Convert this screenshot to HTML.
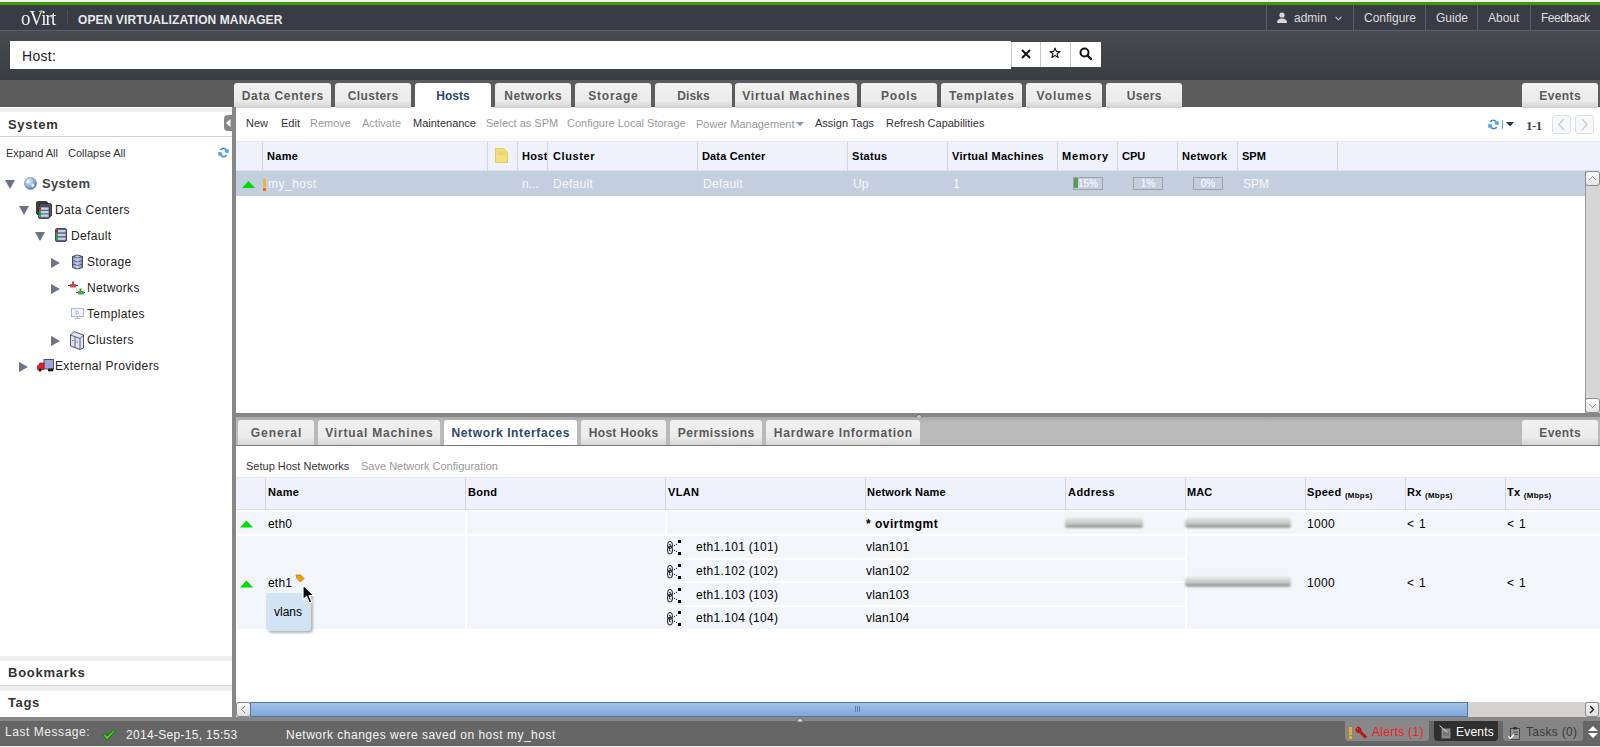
<!DOCTYPE html>
<html><head><meta charset="utf-8">
<style>
*{box-sizing:border-box;margin:0;padding:0}
html,body{width:1600px;height:747px;overflow:hidden;background:#fff;font-family:"Liberation Sans",sans-serif;position:relative}
.a{position:absolute}
.t{position:absolute;white-space:nowrap;line-height:1}
svg{position:absolute;overflow:visible}
/* header */
#topline{left:0;top:0;width:1600px;height:2px;background:#f2f0f0}
#green{left:0;top:2px;width:1600px;height:3px;background:#3e9c04}
#hdr{left:0;top:5px;width:1600px;height:25px;background:#393c46}
#hdrline{left:0;top:30px;width:1600px;height:1px;background:#5a606b}
#search{left:0;top:31px;width:1600px;height:49px;background:linear-gradient(#474b50,#393e42)}
#tabbar{left:0;top:80px;width:1600px;height:27px;background:#5c5c5c}
.hm{position:absolute;top:5px;height:25px;border-left:1px solid #5a606b}
.hmt{position:absolute;top:12px;font-size:12px;color:#dedede;line-height:1;white-space:nowrap}
.mtab{position:absolute;top:83px;height:25px;background:linear-gradient(#f1f1f1 0,#ebebeb 70%,#d2d2d2 100%);border-radius:3px 3px 0 0;font-weight:bold;font-size:12px;color:#5a5a5a;text-align:center;line-height:26px;letter-spacing:0.3px}
.mtab.sel{background:#fff;color:#2b476f}
/* left */
#left{left:0;top:107px;width:232px;height:611px;background:#fff}
#split{left:232px;top:107px;width:4px;height:611px;background:#878787}
.tree{position:absolute;font-size:12px;color:#222;line-height:1;white-space:nowrap;letter-spacing:0.35px}
.tri{position:absolute;width:0;height:0;border-style:solid}
.tri.d{border-width:9px 5px 0 5px;border-color:#6b7385 transparent transparent transparent}
.tri.r{border-width:5px 0 5px 9px;border-color:transparent transparent transparent #6b7385}
/* toolbar */
.tb{position:absolute;top:118px;font-size:11px;color:#333;line-height:1;white-space:nowrap}
.tb.dis{color:#999}
/* grid */
.gh{position:absolute;background:#eff2fc;border-top:1px solid #e3e8f3;border-bottom:1px solid #dde3ee}
.gd{position:absolute;width:1px;background:#d2d6de}
.ght{position:absolute;font-size:11px;font-weight:bold;color:#000;line-height:1;white-space:nowrap;letter-spacing:0.3px}
.rowt{position:absolute;font-size:12px;color:#f6f8fb;line-height:1;white-space:nowrap}
.bar{position:absolute;height:13px;border:1px solid #a2a2a2;background:transparent;font-size:10px;color:#fff;text-align:center;line-height:11px}
.stab{position:absolute;top:420px;height:25px;background:linear-gradient(#f1f1f1 0,#ebebeb 70%,#d4d4d4 100%);border-radius:3px 3px 0 0;font-weight:bold;font-size:12px;color:#5a5a5a;text-align:center;line-height:26px;letter-spacing:0.3px}
.stab.sel{background:#fff;color:#2b476f}
.mb{font-size:8px;letter-spacing:0.25px;position:relative;top:2px}
.nt{position:absolute;font-size:12px;color:#000;line-height:1;white-space:nowrap}
.lr{position:absolute;background:#f2f5fa}
</style></head><body>
<div id="topline" class="a"></div>
<div id="green" class="a"></div>
<div id="hdr" class="a"></div>
<div id="hdrline" class="a"></div>
<div id="search" class="a"></div>
<div id="tabbar" class="a"></div>

<!-- logo -->
<div class="t" style="left:21px;top:8px;font-family:'Liberation Serif',serif;font-size:21px;color:#f2f2f2;letter-spacing:-1px;transform:scaleX(0.9);transform-origin:0 0">oVirt</div>
<div class="a" style="left:40px;top:10px;width:3px;height:3px;background:#7cc242;border-radius:50%"></div>
<div class="a" style="left:67px;top:10px;width:1px;height:14px;background:#4a4e57"></div>
<div class="t" style="left:78px;top:14px;font-size:12px;font-weight:bold;color:#e9e9e9;letter-spacing:0.1px">OPEN VIRTUALIZATION MANAGER</div>

<!-- header menu -->
<div class="hm" style="left:1266px;width:87px"></div>
<div class="hm" style="left:1353px;width:72px"></div>
<div class="hm" style="left:1425px;width:52px"></div>
<div class="hm" style="left:1477px;width:53px"></div>
<div class="hm" style="left:1530px;width:70px"></div>
<svg style="left:1277px;top:12px" width="10" height="11" viewBox="0 0 10 11"><circle cx="5" cy="3" r="2.6" fill="#d8d8d8"/><path d="M0 11 Q0 6.5 5 6.5 Q10 6.5 10 11Z" fill="#d8d8d8"/></svg>
<div class="hmt" style="left:1294px">admin</div>
<svg style="left:1335px;top:16px" width="7" height="5" viewBox="0 0 7 5"><path d="M0.5 0.8 L3.5 3.8 L6.5 0.8" stroke="#cfcfcf" stroke-width="1.1" fill="none"/></svg>
<div class="hmt" style="left:1364px">Configure</div>
<div class="hmt" style="left:1436px">Guide</div>
<div class="hmt" style="left:1488px">About</div>
<div class="hmt" style="left:1541px;letter-spacing:-0.5px">Feedback</div>

<!-- search -->
<div class="a" style="left:10px;top:41px;width:1001px;height:28px;background:#fff"></div>
<div class="t" style="left:22px;top:49px;font-size:14px;color:#222;letter-spacing:0.3px">Host:</div>
<div class="a" style="left:1011px;top:42px;width:90px;height:25px;background:#fff;border-left:1px solid #c8c8c8"></div>
<div class="a" style="left:1040px;top:42px;width:1px;height:25px;background:#c8c8c8"></div>
<div class="a" style="left:1070px;top:42px;width:1px;height:25px;background:#c8c8c8"></div>
<svg style="left:1021px;top:49px" width="10" height="10" viewBox="0 0 10 10"><path d="M1 1L9 9M9 1L1 9" stroke="#111" stroke-width="2"/></svg>
<svg style="left:1049px;top:47px" width="12" height="12" viewBox="0 0 12 12"><path d="M6 1 L7.3 4.4 L11 4.5 L8.1 6.8 L9.1 10.5 L6 8.4 L2.9 10.5 L3.9 6.8 L1 4.5 L4.7 4.4Z" fill="none" stroke="#111" stroke-width="1.1" stroke-linejoin="round"/></svg>
<svg style="left:1079px;top:47px" width="13" height="13" viewBox="0 0 13 13"><circle cx="5.5" cy="5.5" r="4" fill="none" stroke="#111" stroke-width="2"/><path d="M8.5 8.5L12 12" stroke="#111" stroke-width="2.4" stroke-linecap="round"/></svg>

<!-- main tabs -->
<div class="mtab" style="left:234px;width:97px;letter-spacing:0.68px;text-indent:0.68px">Data Centers</div>
<div class="mtab" style="left:335px;width:76px;letter-spacing:0.34px;text-indent:0.34px">Clusters</div>
<div class="mtab sel" style="left:415px;width:76px;letter-spacing:0px;text-indent:0px">Hosts</div>
<div class="mtab" style="left:495px;width:76px;letter-spacing:0.47px;text-indent:0.47px">Networks</div>
<div class="mtab" style="left:575px;width:76px;letter-spacing:0.78px;text-indent:0.78px">Storage</div>
<div class="mtab" style="left:655px;width:77px;letter-spacing:0.1px;text-indent:0.1px">Disks</div>
<div class="mtab" style="left:735px;width:122px;letter-spacing:0.82px;text-indent:0.82px">Virtual Machines</div>
<div class="mtab" style="left:861px;width:76px;letter-spacing:0.8px;text-indent:0.8px">Pools</div>
<div class="mtab" style="left:941px;width:81px;letter-spacing:0.8px;text-indent:0.8px">Templates</div>
<div class="mtab" style="left:1026px;width:76px;letter-spacing:0.95px;text-indent:0.95px">Volumes</div>
<div class="mtab" style="left:1106px;width:76px;letter-spacing:0.34px;text-indent:0.34px">Users</div>
<div class="mtab" style="left:1522px;width:76px;letter-spacing:0.4px;text-indent:0.4px">Events</div>

<!-- LEFT PANEL -->
<div id="left" class="a"></div>
<div class="a" style="left:0;top:108px;width:232px;height:4px;background:#efefef"></div>
<div class="t" style="left:8px;top:118px;font-size:13px;font-weight:bold;color:#333;letter-spacing:0.7px">System</div>
<div class="a" style="left:0;top:136px;width:232px;height:1px;background:#cfcfcf"></div>
<div class="t" style="left:6px;top:148px;font-size:11px;color:#333">Expand All</div>
<div class="t" style="left:68px;top:148px;font-size:11px;color:#333">Collapse All</div>


<!-- tree -->
<div class="tri d" style="left:5px;top:180px"></div>
<svg style="left:24px;top:177px" width="13" height="13" viewBox="0 0 13 13"><defs><radialGradient id="gl" cx="0.35" cy="0.3" r="0.8"><stop offset="0" stop-color="#eef4fb"/><stop offset="0.6" stop-color="#7fa8d8"/><stop offset="1" stop-color="#2f64a8"/></radialGradient></defs><circle cx="6.5" cy="6.5" r="6" fill="url(#gl)" stroke="#8a96a6" stroke-width="0.8"/><path d="M3 3.5 Q5 2.5 6 4.5 Q5 6.5 3.5 6 Z M7.5 6.5 Q10 6 10.5 8.5 Q9 11 7.5 10Z" fill="#fff" opacity="0.85"/></svg>
<div class="tree" style="left:42px;top:177px;font-weight:bold;font-size:13px;color:#444">System</div>

<div class="tri d" style="left:19px;top:206px"></div>
<svg style="left:36px;top:201px" width="17" height="18" viewBox="0 0 17 18"><rect x="0.5" y="0.5" width="11" height="13" rx="1.5" fill="#3d3f44" stroke="#222" stroke-width="0.8"/><rect x="3.5" y="2.5" width="12" height="13" rx="1.5" fill="#55585f" stroke="#222" stroke-width="0.8"/><rect x="2.5" y="5" width="11" height="12.5" rx="1.5" fill="#5c6a8c" stroke="#2a2f3c" stroke-width="0.8"/><rect x="5" y="6.5" width="7.5" height="2.3" fill="#c8d2e6"/><rect x="5" y="10" width="7.5" height="2.3" fill="#c8d2e6"/><rect x="5" y="13.5" width="7.5" height="2.3" fill="#c8d2e6"/><rect x="3" y="6.5" width="1.8" height="2.2" fill="#f00"/><rect x="3" y="10" width="1.8" height="2.2" fill="#0c0"/><rect x="3" y="13.5" width="1.8" height="2.2" fill="#0c0"/></svg>
<div class="tree" style="left:55px;top:204px">Data Centers</div>

<div class="tri d" style="left:35px;top:232px"></div>
<svg style="left:55px;top:228px" width="12" height="14" viewBox="0 0 12 14"><rect x="0.5" y="0.5" width="11" height="13" rx="1.5" fill="#5c6a8c" stroke="#2a2f3c" stroke-width="0.8"/><rect x="3" y="2" width="7.5" height="2.3" fill="#c8d2e6"/><rect x="3" y="5.8" width="7.5" height="2.3" fill="#c8d2e6"/><rect x="3" y="9.6" width="7.5" height="2.3" fill="#c8d2e6"/><rect x="1" y="2" width="1.8" height="2.2" fill="#f00"/><rect x="1" y="5.8" width="1.8" height="2.2" fill="#0c0"/><rect x="1" y="9.6" width="1.8" height="2.2" fill="#0c0"/></svg>
<div class="tree" style="left:71px;top:230px">Default</div>

<div class="tri r" style="left:51px;top:258px"></div>
<svg style="left:72px;top:254px" width="11" height="16" viewBox="0 0 11 16"><defs><linearGradient id="cy" x1="0" x2="1"><stop offset="0" stop-color="#8a93b8"/><stop offset="0.5" stop-color="#d0d6ea"/><stop offset="1" stop-color="#7c86ac"/></linearGradient></defs><path d="M0.5 2.5 Q5.5 -0.5 10.5 2.5 V13.5 Q5.5 16.5 0.5 13.5Z" fill="url(#cy)" stroke="#3b3f55" stroke-width="0.9"/><path d="M0.5 2.5 Q5.5 5.5 10.5 2.5 M0.5 6.5 Q5.5 9.5 10.5 6.5 M0.5 10 Q5.5 13 10.5 10" fill="none" stroke="#3b3f55" stroke-width="0.7"/></svg>
<div class="tree" style="left:87px;top:256px">Storage</div>

<div class="tri r" style="left:51px;top:284px"></div>
<svg style="left:67px;top:281px" width="19" height="14" viewBox="0 0 19 14"><path d="M1 4.5H11 M6 1.5V4.5 M9 8H9.5 M9 11.5H18 M13.5 8.5V11.5" stroke="#333" stroke-width="1"/><rect x="3" y="3" width="6" height="3.5" rx="1" fill="#d04545"/><rect x="11" y="10" width="6" height="3.5" rx="1" fill="#3cb04a"/><rect x="5" y="0.5" width="2" height="2" fill="#b33"/><rect x="12.5" y="7.5" width="2" height="2" fill="#3a3"/></svg>
<div class="tree" style="left:87px;top:282px">Networks</div>

<svg style="left:71px;top:308px" width="13" height="11" viewBox="0 0 13 11"><rect x="0.5" y="0.5" width="12" height="8" fill="#f4f4ff" stroke="#a4a8e0" stroke-width="0.9"/><path d="M5 2.5V6.5L8 4.5Z" fill="none" stroke="#a4a8e0" stroke-width="0.8"/><path d="M6.5 8.5V10.5 M3.5 10.5H9.5" stroke="#a4a8e0" stroke-width="0.9"/></svg>
<div class="tree" style="left:87px;top:308px">Templates</div>

<div class="tri r" style="left:51px;top:336px"></div>
<svg style="left:70px;top:331px" width="14" height="19" viewBox="0 0 14 19"><path d="M0.5 4 L4 0.5 L13.5 4 V17 L10 18.5 L0.5 15Z" fill="#dde3f3" stroke="#3d4255" stroke-width="0.9"/><path d="M0.5 4 L10 7.5 V18.5 M10 7.5 L13.5 4 M5 5.8 V16.5" fill="none" stroke="#3d4255" stroke-width="0.8"/><rect x="2" y="9" width="1.5" height="1" fill="#667"/><rect x="6.5" y="10.5" width="1.5" height="1" fill="#667"/></svg>
<div class="tree" style="left:87px;top:334px">Clusters</div>

<div class="tri r" style="left:19px;top:362px"></div>
<svg style="left:37px;top:359px" width="17" height="13" viewBox="0 0 17 13"><rect x="7" y="0.5" width="9.5" height="9.5" fill="#9da5d8" stroke="#3d4270" stroke-width="0.9"/><path d="M0.5 7 L3 4 H7 V10.5 H0.5Z" fill="#e02020" stroke="#900" stroke-width="0.6"/><circle cx="3" cy="11" r="1.6" fill="#111"/><circle cx="12.5" cy="11" r="1.6" fill="#111"/><circle cx="15" cy="11" r="1.4" fill="#111"/></svg>
<div class="tree" style="left:55px;top:360px">External Providers</div>

<!-- left bottom panels -->
<div class="a" style="left:0;top:656px;width:232px;height:5px;background:#efefef"></div>
<div class="t" style="left:8px;top:666px;font-size:13px;font-weight:bold;color:#333;letter-spacing:0.75px">Bookmarks</div>
<div class="a" style="left:0;top:685px;width:232px;height:1px;background:#d0d0d0"></div>
<div class="a" style="left:0;top:686px;width:232px;height:5px;background:#efefef"></div>
<div class="t" style="left:8px;top:696px;font-size:13px;font-weight:bold;color:#333;letter-spacing:0.6px">Tags</div>


<!-- MAIN UPPER -->
<div class="a" style="left:236px;top:108px;width:1364px;height:305px;background:#fff"></div>
<div class="tb" style="left:246px">New</div>
<div class="tb" style="left:281px">Edit</div>
<div class="tb dis" style="left:310px">Remove</div>
<div class="tb dis" style="left:362px">Activate</div>
<div class="tb" style="left:413px">Maintenance</div>
<div class="tb dis" style="left:486px">Select as SPM</div>
<div class="tb dis" style="left:567px">Configure Local Storage</div>
<div class="tb dis" style="left:696px;top:119px">Power Management</div>
<svg style="left:796px;top:122px" width="8" height="5" viewBox="0 0 8 5"><path d="M0 0H8L4 4.5Z" fill="#8aa0c0"/></svg>
<div class="tb" style="left:815px">Assign Tags</div>
<div class="tb" style="left:886px">Refresh Capabilities</div>

<!-- pager -->
<svg style="left:1488px;top:119px" width="11" height="11" viewBox="0 0 11 11"><path d="M2.3 3 Q5 -0.3 8.2 2.6" fill="none" stroke="#3a8ee8" stroke-width="1.7"/><path d="M6.6 2 L11 2.4 L10.6 6.2 L7 5.4Z" fill="#5aa2ee"/><path d="M8.7 8 Q6 11.3 2.8 8.4" fill="none" stroke="#3a8ee8" stroke-width="1.7"/><path d="M4.4 9 L0 8.6 L0.4 4.8 L4 5.6Z" fill="#5aa2ee"/></svg>
<div class="a" style="left:1502px;top:120px;width:1px;height:9px;background:#6aa0e0"></div>
<svg style="left:1506px;top:122px" width="8" height="5" viewBox="0 0 8 5"><path d="M0 0H8L4 4.5Z" fill="#1f3550"/></svg>
<div class="t" style="left:1526px;top:119px;font-size:13px;font-weight:bold;color:#444;font-family:'Liberation Serif',serif;letter-spacing:-0.5px">1-1</div>
<div class="a" style="left:1552px;top:115px;width:19px;height:19px;border:1px solid #dde0e8;border-radius:3px;background:#f7f8fc"></div>
<div class="a" style="left:1575px;top:115px;width:19px;height:19px;border:1px solid #dde0e8;border-radius:3px;background:#f7f8fc"></div>
<svg style="left:1557px;top:118px" width="9" height="13" viewBox="0 0 9 13"><path d="M7 1L2 6.5L7 12" fill="none" stroke="#ccc" stroke-width="1.4"/></svg>
<svg style="left:1580px;top:118px" width="9" height="13" viewBox="0 0 9 13"><path d="M2 1L7 6.5L2 12" fill="none" stroke="#ccc" stroke-width="1.4"/></svg>

<!-- upper grid header -->
<div class="gh" style="left:236px;top:141px;width:1364px;height:30px"></div>
<div class="gd" style="left:262px;top:142px;height:29px"></div>
<div class="gd" style="left:487px;top:142px;height:29px"></div>
<div class="gd" style="left:517px;top:142px;height:29px"></div>
<div class="gd" style="left:547px;top:142px;height:29px"></div>
<div class="gd" style="left:697px;top:142px;height:29px"></div>
<div class="gd" style="left:847px;top:142px;height:29px"></div>
<div class="gd" style="left:947px;top:142px;height:29px"></div>
<div class="gd" style="left:1057px;top:142px;height:29px"></div>
<div class="gd" style="left:1117px;top:142px;height:29px"></div>
<div class="gd" style="left:1177px;top:142px;height:29px"></div>
<div class="gd" style="left:1237px;top:142px;height:29px"></div>
<div class="gd" style="left:1337px;top:142px;height:29px"></div>
<div class="ght" style="left:267px;top:151px">Name</div>
<svg style="left:495px;top:148px" width="13" height="15" viewBox="0 0 13 15"><path d="M0.5 0.5H9L12.5 4V14.5H0.5Z" fill="#f3e07a" stroke="#d8c050" stroke-width="0.8"/><path d="M2.5 4H10 M2.5 6H10" stroke="#d4bf55" stroke-width="0.6"/></svg>
<div class="a" style="left:517px;top:142px;width:30px;height:29px;overflow:hidden"><div class="ght" style="left:5px;top:9px">Host</div></div>
<div class="ght" style="left:553px;top:151px;letter-spacing:0.6px">Cluster</div>
<div class="ght" style="left:702px;top:151px;letter-spacing:0.15px">Data Center</div>
<div class="ght" style="left:852px;top:151px">Status</div>
<div class="ght" style="left:952px;top:151px">Virtual Machines</div>
<div class="ght" style="left:1062px;top:151px;letter-spacing:0.8px">Memory</div>
<div class="ght" style="left:1122px;top:151px;letter-spacing:0">CPU</div>
<div class="ght" style="left:1182px;top:151px">Network</div>
<div class="ght" style="left:1242px;top:151px;letter-spacing:0">SPM</div>

<!-- selected row -->
<div class="a" style="left:236px;top:171px;width:1349px;height:25px;background:#c3cfdf"></div>
<svg style="left:242px;top:181px" width="13" height="7" viewBox="0 0 13 7"><path d="M0 7L6.5 0L13 7Z" fill="#00dd00"/></svg>
<div class="a" style="left:263px;top:179px;width:3px;height:8px;background:#f5b02a"></div>
<div class="a" style="left:263px;top:188px;width:3px;height:3px;background:#e86a10"></div>
<div class="rowt" style="left:268px;top:178px;letter-spacing:0.5px">my_host</div>
<div class="rowt" style="left:522px;top:178px">n...</div>
<div class="rowt" style="left:553px;top:178px;letter-spacing:0.3px">Default</div>
<div class="rowt" style="left:703px;top:178px;letter-spacing:0.3px">Default</div>
<div class="rowt" style="left:853px;top:178px">Up</div>
<div class="rowt" style="left:953px;top:178px">1</div>
<div class="bar" style="left:1073px;top:177px;width:30px"><div class="a" style="left:0;top:0;width:4px;height:10px;background:#5a9a50"></div><span style="position:relative">15%</span></div>
<div class="bar" style="left:1133px;top:177px;width:30px">1%</div>
<div class="bar" style="left:1193px;top:177px;width:30px">0%</div>
<div class="rowt" style="left:1243px;top:178px">SPM</div>

<!-- v scrollbar upper -->
<div class="a" style="left:1585px;top:171px;width:15px;height:242px;background:#d6d6d6;border-left:1px solid #9a9a9a"></div>
<div class="a" style="left:1585px;top:171px;width:15px;height:15px;background:linear-gradient(#fff,#e4e4e4);border:1px solid #8a8a8a;border-radius:3px"></div>
<svg style="left:1588px;top:175px" width="9" height="6" viewBox="0 0 9 6"><path d="M1 5L4.5 1.5L8 5" fill="none" stroke="#999" stroke-width="1"/></svg>
<div class="a" style="left:1585px;top:398px;width:15px;height:15px;background:linear-gradient(#fff,#e4e4e4);border:1px solid #8a8a8a;border-radius:3px"></div>
<svg style="left:1588px;top:403px" width="9" height="6" viewBox="0 0 9 6"><path d="M1 1L4.5 4.5L8 1" fill="none" stroke="#999" stroke-width="1"/></svg>

<!-- h splitter -->
<div class="a" style="left:236px;top:413px;width:1364px;height:4px;background:#878787"></div>
<div class="a" style="left:236px;top:417px;width:1364px;height:28px;background:linear-gradient(#aaaaaa 0,#b2b2b2 3px,#b9b9b9 4px)"></div>
<div class="a" style="left:236px;top:445px;width:1364px;height:1px;background:#7a7a7a"></div>
<div class="stab" style="left:238px;width:76px;letter-spacing:1.0px;text-indent:1.0px">General</div>
<div class="stab" style="left:318px;width:122px;letter-spacing:0.82px;text-indent:0.82px">Virtual Machines</div>
<div class="stab sel" style="left:444px;width:133px;letter-spacing:0.62px;text-indent:0.62px">Network Interfaces</div>
<div class="stab" style="left:581px;width:85px;letter-spacing:0.3px;text-indent:0.3px">Host Hooks</div>
<div class="stab" style="left:670px;width:92px;letter-spacing:0.5px;text-indent:0.5px">Permissions</div>
<div class="stab" style="left:766px;width:154px;letter-spacing:0.75px;text-indent:0.75px">Hardware Information</div>
<div class="stab" style="left:1522px;width:76px;letter-spacing:0.4px;text-indent:0.4px">Events</div>

<!-- lower toolbar -->
<div class="a" style="left:236px;top:446px;width:1364px;height:256px;background:#fff"></div>
<div class="tb" style="left:246px;top:461px">Setup Host Networks</div>
<div class="tb dis" style="left:361px;top:461px">Save Network Configuration</div>

<!-- lower grid header -->
<div class="gh" style="left:236px;top:477px;width:1364px;height:33px"></div>
<div class="gd" style="left:265px;top:478px;height:32px"></div>
<div class="gd" style="left:465px;top:478px;height:32px"></div>
<div class="gd" style="left:665px;top:478px;height:32px"></div>
<div class="gd" style="left:865px;top:478px;height:32px"></div>
<div class="gd" style="left:1065px;top:478px;height:32px"></div>
<div class="gd" style="left:1185px;top:478px;height:32px"></div>
<div class="gd" style="left:1305px;top:478px;height:32px"></div>
<div class="gd" style="left:1405px;top:478px;height:32px"></div>
<div class="gd" style="left:1505px;top:478px;height:32px"></div>
<div class="ght" style="left:268px;top:487px">Name</div>
<div class="ght" style="left:468px;top:487px">Bond</div>
<div class="ght" style="left:668px;top:487px">VLAN</div>
<div class="ght" style="left:867px;top:487px;letter-spacing:0.2px">Network Name</div>
<div class="ght" style="left:1068px;top:487px;letter-spacing:0.45px">Address</div>
<div class="ght" style="left:1187px;top:487px;letter-spacing:0.1px">MAC</div>
<div class="ght" style="left:1307px;top:487px">Speed <span class="mb">(Mbps)</span></div>
<div class="ght" style="left:1407px;top:487px">Rx <span class="mb">(Mbps)</span></div>
<div class="ght" style="left:1507px;top:487px">Tx <span class="mb">(Mbps)</span></div>

<!-- lower rows -->
<!-- eth0 row -->
<div class="lr" style="left:237px;top:512px;width:228px;height:22px"></div>
<div class="lr" style="left:467px;top:512px;width:198px;height:22px"></div>
<div class="lr" style="left:667px;top:512px;width:518px;height:22px"></div>
<div class="lr" style="left:1187px;top:512px;width:413px;height:22px"></div>
<!-- eth1 row -->
<div class="lr" style="left:237px;top:536px;width:228px;height:93px"></div>
<div class="lr" style="left:467px;top:536px;width:198px;height:93px"></div>
<div class="lr" style="left:667px;top:536px;width:518px;height:22px"></div>
<div class="lr" style="left:667px;top:560px;width:518px;height:21px"></div>
<div class="lr" style="left:667px;top:583px;width:518px;height:22px"></div>
<div class="lr" style="left:667px;top:607px;width:518px;height:22px"></div>
<div class="lr" style="left:1187px;top:536px;width:413px;height:93px"></div>

<svg style="left:240px;top:520px" width="13" height="8" viewBox="0 0 13 8"><path d="M0 7.5L6.5 0.5L13 7.5Z" fill="#00dd00"/></svg>
<div class="nt" style="left:268px;top:518px;letter-spacing:0.2px">eth0</div>
<div class="nt" style="left:866px;top:518px;font-weight:bold;font-size:12px;letter-spacing:0.5px">* ovirtmgmt</div>
<div class="a" style="left:1065px;top:518px;width:78px;height:10px;border-radius:3px;background:linear-gradient(#e6e6e6 0%,#cfcfcf 40%,#bdbdbd 70%,#7a7a7a 88%,#d8d8d8 100%);filter:blur(1px)"></div>
<div class="a" style="left:1185px;top:518px;width:106px;height:10px;border-radius:3px;background:linear-gradient(#e6e6e6 0%,#cfcfcf 40%,#bdbdbd 70%,#7a7a7a 88%,#d8d8d8 100%);filter:blur(1px)"></div>
<div class="nt" style="left:1307px;top:518px;letter-spacing:0.3px">1000</div>
<div class="nt" style="left:1407px;top:518px;letter-spacing:0.8px">&lt; 1</div>
<div class="nt" style="left:1507px;top:518px;letter-spacing:0.8px">&lt; 1</div>

<svg style="left:240px;top:580px" width="13" height="8" viewBox="0 0 13 8"><path d="M0 7.5L6.5 0.5L13 7.5Z" fill="#00dd00"/></svg>
<div class="nt" style="left:268px;top:577px;letter-spacing:0.2px">eth1</div>
<svg style="left:295px;top:574px" width="10" height="10" viewBox="0 0 10 10"><path d="M1 1H5.5L9 4.5L5.5 8L2 4.5Z" fill="#f0a000" stroke="#c07800" stroke-width="0.8"/></svg>
<svg style="left:667px;top:540px" width="15" height="16" viewBox="0 0 15 16"><path d="M3 1.5 Q5.4 1.5 5.4 4.5 V6.5 Q5.4 8 3 8.2 Q0.6 8 0.6 6.5 V4.5 Q0.6 1.5 3 1.5Z" fill="none" stroke="#000" stroke-width="0.9"/><path d="M3 6 Q5.4 6 5.4 9 V11 Q5.4 14 3 14 Q0.6 14 0.6 11 V9 Q0.6 6.2 3 6Z" fill="none" stroke="#000" stroke-width="0.9"/><path d="M2 4.5 Q3.8 4 3.8 5.5 L2.5 7.5 V10.5 Q2.5 11.2 3.8 11" fill="none" stroke="#000" stroke-width="0.8"/><circle cx="7.5" cy="5.3" r="0.6" fill="#000"/><circle cx="9.5" cy="4.3" r="0.6" fill="#000"/><circle cx="7.5" cy="10.3" r="0.6" fill="#000"/><circle cx="9.5" cy="11.3" r="0.6" fill="#000"/><rect x="11" y="0" width="3" height="3" fill="#000"/><rect x="11" y="12" width="3" height="3" fill="#000"/></svg>
<svg style="left:667px;top:564px" width="15" height="16" viewBox="0 0 15 16"><path d="M3 1.5 Q5.4 1.5 5.4 4.5 V6.5 Q5.4 8 3 8.2 Q0.6 8 0.6 6.5 V4.5 Q0.6 1.5 3 1.5Z" fill="none" stroke="#000" stroke-width="0.9"/><path d="M3 6 Q5.4 6 5.4 9 V11 Q5.4 14 3 14 Q0.6 14 0.6 11 V9 Q0.6 6.2 3 6Z" fill="none" stroke="#000" stroke-width="0.9"/><path d="M2 4.5 Q3.8 4 3.8 5.5 L2.5 7.5 V10.5 Q2.5 11.2 3.8 11" fill="none" stroke="#000" stroke-width="0.8"/><circle cx="7.5" cy="5.3" r="0.6" fill="#000"/><circle cx="9.5" cy="4.3" r="0.6" fill="#000"/><circle cx="7.5" cy="10.3" r="0.6" fill="#000"/><circle cx="9.5" cy="11.3" r="0.6" fill="#000"/><rect x="11" y="0" width="3" height="3" fill="#000"/><rect x="11" y="12" width="3" height="3" fill="#000"/></svg>
<svg style="left:667px;top:588px" width="15" height="16" viewBox="0 0 15 16"><path d="M3 1.5 Q5.4 1.5 5.4 4.5 V6.5 Q5.4 8 3 8.2 Q0.6 8 0.6 6.5 V4.5 Q0.6 1.5 3 1.5Z" fill="none" stroke="#000" stroke-width="0.9"/><path d="M3 6 Q5.4 6 5.4 9 V11 Q5.4 14 3 14 Q0.6 14 0.6 11 V9 Q0.6 6.2 3 6Z" fill="none" stroke="#000" stroke-width="0.9"/><path d="M2 4.5 Q3.8 4 3.8 5.5 L2.5 7.5 V10.5 Q2.5 11.2 3.8 11" fill="none" stroke="#000" stroke-width="0.8"/><circle cx="7.5" cy="5.3" r="0.6" fill="#000"/><circle cx="9.5" cy="4.3" r="0.6" fill="#000"/><circle cx="7.5" cy="10.3" r="0.6" fill="#000"/><circle cx="9.5" cy="11.3" r="0.6" fill="#000"/><rect x="11" y="0" width="3" height="3" fill="#000"/><rect x="11" y="12" width="3" height="3" fill="#000"/></svg>
<svg style="left:667px;top:611px" width="15" height="16" viewBox="0 0 15 16"><path d="M3 1.5 Q5.4 1.5 5.4 4.5 V6.5 Q5.4 8 3 8.2 Q0.6 8 0.6 6.5 V4.5 Q0.6 1.5 3 1.5Z" fill="none" stroke="#000" stroke-width="0.9"/><path d="M3 6 Q5.4 6 5.4 9 V11 Q5.4 14 3 14 Q0.6 14 0.6 11 V9 Q0.6 6.2 3 6Z" fill="none" stroke="#000" stroke-width="0.9"/><path d="M2 4.5 Q3.8 4 3.8 5.5 L2.5 7.5 V10.5 Q2.5 11.2 3.8 11" fill="none" stroke="#000" stroke-width="0.8"/><circle cx="7.5" cy="5.3" r="0.6" fill="#000"/><circle cx="9.5" cy="4.3" r="0.6" fill="#000"/><circle cx="7.5" cy="10.3" r="0.6" fill="#000"/><circle cx="9.5" cy="11.3" r="0.6" fill="#000"/><rect x="11" y="0" width="3" height="3" fill="#000"/><rect x="11" y="12" width="3" height="3" fill="#000"/></svg>
<div class="nt" style="left:696px;top:541px;letter-spacing:0.3px">eth1.101 (101)</div>
<div class="nt" style="left:696px;top:565px;letter-spacing:0.3px">eth1.102 (102)</div>
<div class="nt" style="left:696px;top:589px;letter-spacing:0.3px">eth1.103 (103)</div>
<div class="nt" style="left:696px;top:612px;letter-spacing:0.3px">eth1.104 (104)</div>
<div class="nt" style="left:866px;top:541px;letter-spacing:0.2px">vlan101</div>
<div class="nt" style="left:866px;top:565px;letter-spacing:0.2px">vlan102</div>
<div class="nt" style="left:866px;top:589px;letter-spacing:0.2px">vlan103</div>
<div class="nt" style="left:866px;top:612px;letter-spacing:0.2px">vlan104</div>
<div class="a" style="left:1185px;top:577px;width:106px;height:10px;border-radius:3px;background:linear-gradient(#e6e6e6 0%,#cfcfcf 40%,#bdbdbd 70%,#7a7a7a 88%,#d8d8d8 100%);filter:blur(1px)"></div>
<div class="nt" style="left:1307px;top:577px;letter-spacing:0.3px">1000</div>
<div class="nt" style="left:1407px;top:577px;letter-spacing:0.8px">&lt; 1</div>
<div class="nt" style="left:1507px;top:577px;letter-spacing:0.8px">&lt; 1</div>

<!-- tooltip -->
<div class="a" style="left:268px;top:595px;width:45px;height:38px;border-radius:0 0 4px 4px;background:#9a9a9a;filter:blur(1px);opacity:0.7"></div>
<div class="a" style="left:266px;top:593px;width:45px;height:38px;border-radius:0 0 4px 4px;background:#d2e3f4"></div>
<div class="nt" style="left:274px;top:606px">vlans</div>
<!-- cursor -->
<svg style="left:302px;top:584px" width="14" height="20" viewBox="0 0 14 20"><path d="M1 1V16L4.5 12.5L7.5 19L10 18L7 11.5H12Z" fill="#000" stroke="#fff" stroke-width="1.2" stroke-linejoin="round"/></svg>

<!-- h scrollbar -->
<div class="a" style="left:236px;top:702px;width:1364px;height:15px;background:#d4d2ce"></div>
<div class="a" style="left:236px;top:702px;width:15px;height:15px;background:linear-gradient(#fafafa,#e0e0e0);border:1px solid #8a8a8a;border-radius:3px"></div>
<svg style="left:240px;top:705px" width="6" height="9" viewBox="0 0 6 9"><path d="M5 1L1.5 4.5L5 8" fill="none" stroke="#888" stroke-width="1"/></svg>
<div class="a" style="left:250px;top:702px;width:1218px;height:15px;background:linear-gradient(#a2c2ea,#80a8d8);border:1px solid #4f75aa"></div>
<div class="a" style="left:855px;top:706px;width:1px;height:6px;background:#5a7fb0"></div>
<div class="a" style="left:857px;top:706px;width:1px;height:6px;background:#5a7fb0"></div>
<div class="a" style="left:859px;top:706px;width:1px;height:6px;background:#5a7fb0"></div>
<div class="a" style="left:1585px;top:702px;width:14px;height:15px;background:linear-gradient(#fafafa,#e0e0e0);border:1px solid #8a8a8a;border-radius:3px"></div>
<svg style="left:1589px;top:705px" width="6" height="9" viewBox="0 0 6 9"><path d="M1 1L4.5 4.5L1 8" fill="none" stroke="#111" stroke-width="1.3"/></svg>

<!-- status bar -->
<div class="a" style="left:0;top:717px;width:1600px;height:4px;background:#878787"></div>
<div class="a" style="left:0;top:721px;width:1600px;height:25px;background:#666"></div>
<div class="a" style="left:0;top:746px;width:1600px;height:1px;background:#f0f0f0"></div>
<div class="t" style="left:5px;top:726px;font-size:12px;color:#eee;letter-spacing:0.55px">Last Message:</div>
<svg style="left:102px;top:729px" width="14" height="12" viewBox="0 0 14 12"><path d="M0.8 6.2 L3 4.6 L5.2 7 L11.6 0.6 L13.4 2 L5.2 11.2Z" fill="#3cd41c" stroke="#175c0c" stroke-width="0.9" stroke-linejoin="round"/></svg>
<div class="t" style="left:126px;top:729px;font-size:12px;color:#f4f4f4;letter-spacing:0.3px">2014-Sep-15, 15:53</div>
<div class="t" style="left:286px;top:729px;font-size:12px;color:#f4f4f4;letter-spacing:0.5px">Network changes were saved on host my_host</div>

<div class="a" style="left:1345px;top:721px;width:84px;height:20px;background:#888;border-radius:0 0 4px 4px"></div>
<div class="a" style="left:1349px;top:727px;width:3px;height:8px;background:#f5a623"></div>
<div class="a" style="left:1349px;top:736px;width:3px;height:3px;background:#f5a623"></div>
<svg style="left:1354px;top:726px" width="14" height="14" viewBox="0 0 14 14"><path d="M2 2.5 A3 3 0 0 0 5.5 6.5 L11 12.5 L12.8 10.8 L7 5 A3 3 0 0 0 3.2 1.2 L4.8 3 L3.8 4.2Z" fill="#e01010" stroke="#700" stroke-width="0.5"/></svg>
<div class="t" style="left:1372px;top:726px;font-size:12px;color:#ee1c1c;letter-spacing:0.3px">Alerts (1)</div>
<div class="a" style="left:1434px;top:721px;width:64px;height:20px;background:#2f2f2f;border-radius:0 0 4px 4px"></div>
<svg style="left:1439px;top:725px" width="13" height="14" viewBox="0 0 13 14"><rect x="2.5" y="3.5" width="9" height="10" fill="#8a8a8a" stroke="#555" stroke-width="0.6"/><path d="M0.5 0.5L9 8" stroke="#ddd" stroke-width="1"/><path d="M4 8H10M4 10H10" stroke="#555" stroke-width="0.8"/></svg>
<div class="t" style="left:1456px;top:726px;font-size:12px;color:#fff;letter-spacing:0.2px">Events</div>
<div class="a" style="left:1503px;top:721px;width:80px;height:20px;background:#858585;border-radius:0 0 4px 4px"></div>
<svg style="left:1508px;top:726px" width="13" height="14" viewBox="0 0 13 14"><rect x="2.5" y="2.5" width="9" height="11" fill="#9a9a9a" stroke="#333" stroke-width="0.8"/><rect x="5" y="1" width="4" height="2.5" fill="#333"/><path d="M5 6H10M5 8.5H10" stroke="#333" stroke-width="0.8"/><path d="M0.5 10.5L2.5 12.5L6 8.5" stroke="#fff" stroke-width="1.2" fill="none"/></svg>
<div class="t" style="left:1526px;top:726px;font-size:12px;color:#3a3a3a;letter-spacing:0.3px">Tasks (0)</div>
<svg style="left:1588px;top:726px" width="10" height="12" viewBox="0 0 10 12"><path d="M0 5L5 0L10 5Z M0 7L5 12L10 7Z" fill="#fff"/></svg>


<svg style="left:218px;top:147px" width="11" height="11" viewBox="0 0 11 11"><path d="M2.3 3 Q5 -0.3 8.2 2.6" fill="none" stroke="#3a8ee8" stroke-width="1.7"/><path d="M6.6 2 L11 2.4 L10.6 6.2 L7 5.4Z" fill="#5aa2ee"/><path d="M8.7 8 Q6 11.3 2.8 8.4" fill="none" stroke="#3a8ee8" stroke-width="1.7"/><path d="M4.4 9 L0 8.6 L0.4 4.8 L4 5.6Z" fill="#5aa2ee"/></svg>
<div id="split" class="a"></div>
<div class="a" style="left:224px;top:115px;width:10px;height:16px;background:#878787;border-radius:4px 0 0 4px"></div>
<svg style="left:226px;top:119px" width="5" height="8" viewBox="0 0 5 8"><path d="M4.5 0V8L0 4Z" fill="#fff"/></svg>
<svg style="left:915px;top:412px" width="8" height="6" viewBox="0 0 8 6"><path d="M1 5.5 A3 3 0 0 1 7 5.5" fill="#c8c8c8" stroke="#666" stroke-width="1"/></svg>
<svg style="left:796px;top:716px" width="8" height="6" viewBox="0 0 8 6"><path d="M1 5.5 A3 3 0 0 1 7 5.5" fill="#e0e0e0" stroke="#666" stroke-width="1"/></svg>
</body></html>
